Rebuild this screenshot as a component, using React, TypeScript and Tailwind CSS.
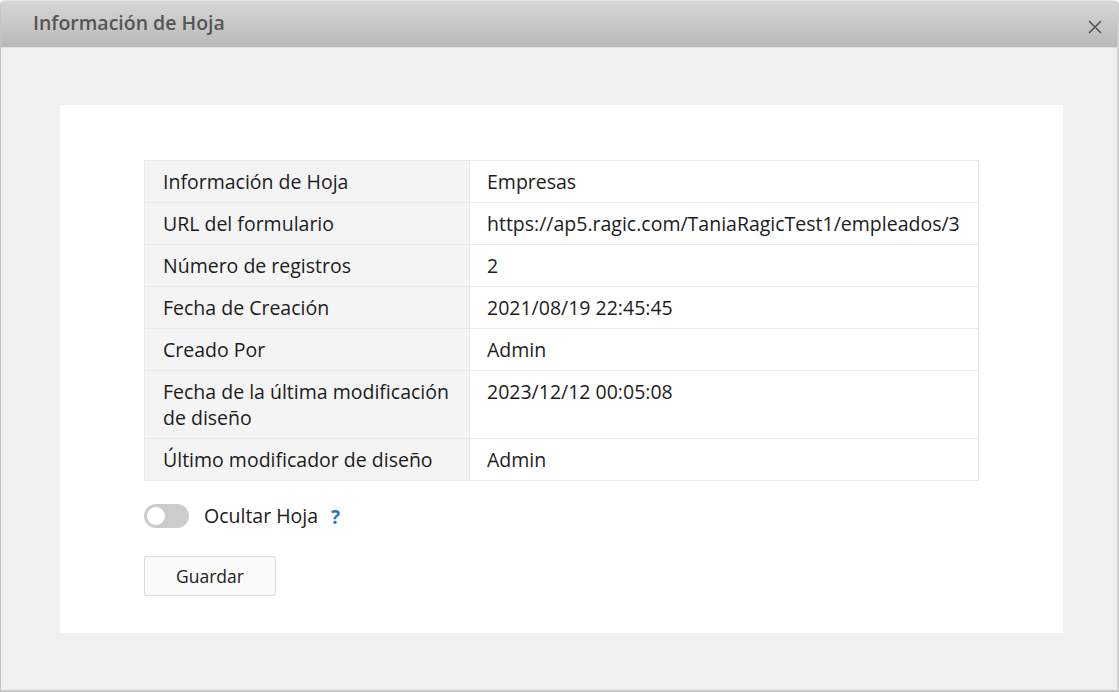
import React from "react";

const rows: [string, string][] = [
  ["Información de Hoja", "Empresas"],
  ["URL del formulario", "https://ap5.ragic.com/TaniaRagicTest1/empleados/3"],
  ["Número de registros", "2"],
  ["Fecha de Creación", "2021/08/19 22:45:45"],
  ["Creado Por", "Admin"],
  ["Fecha de la última modificación de diseño", "2023/12/12 00:05:08"],
  ["Último modificador de diseño", "Admin"],
];

export default function App() {
  return (
    <div
      className="w-[1119px] h-[692px] bg-white"
      style={{ fontFamily: '"Open Sans", "Noto Sans", sans-serif' }}
    >
      <div className="w-full h-full flex flex-col rounded-t-[5px] border border-[#c4c4c4] border-t-[#e6e6e6] border-b-2 border-b-[#c8c8c8] border-r-2 border-r-[#cfcfcf] overflow-hidden bg-[#f0f0f0]">
        <div className="h-[47px] shrink-0 flex items-center justify-between pl-[32px] pr-[14px] bg-gradient-to-b from-[#d6d6d6] to-[#b9b9b9] border-b border-[#e0e0e0]">
          <span className="text-[19.5px] font-semibold text-[#555555] leading-none -mt-[3px]">Información de Hoja</span>
          <svg width="16" height="16" viewBox="0 0 16 16" className="mt-[6px]">
            <path d="M2 2 L14 14 M14 2 L2 14" stroke="#555" strokeWidth="1.6" fill="none" />
          </svg>
        </div>
        <div className="flex-1 pl-[59px] pr-[54px] pt-[57px]">
          <div className="bg-white h-[528px] pl-[84px] pt-[55px]">
            <table className="w-[835px] border-collapse text-[19.5px] leading-[26px] text-[#1c1c1c]">
              <tbody>
                {rows.map(([k, v], i) => (
                  <tr key={i}>
                    <td className="w-[325px] bg-[#f4f4f4] border border-[#e9e9e9] align-top pl-[18px] pr-[10px] pt-[8px] pb-[7px]">
                      {k}
                    </td>
                    <td className="bg-white border border-[#e9e9e9] align-top pl-[17px] pr-[10px] pt-[8px] pb-[7px] whitespace-nowrap">
                      {v}
                    </td>
                  </tr>
                ))}
              </tbody>
            </table>
            <div className="flex items-center mt-[22px] h-[26px]">
              <div className="w-[45px] h-[24px] rounded-full bg-[#cccccc] relative">
                <div className="absolute left-[3px] top-[3px] w-[18px] h-[18px] rounded-full bg-white" />
              </div>
              <span className="ml-[15px] text-[19.5px] text-[#1c1c1c]">Ocultar Hoja</span>
              <span className="ml-[13px] text-[19px] font-bold text-[#1a7dc4] mt-[2px]">?</span>
            </div>
            <button className="mt-[27px] w-[132px] h-[40px] border border-[#dcdcdc] rounded-[3px] bg-[#fafafa] text-[17.5px] text-[#222]">
              Guardar
            </button>
          </div>
        </div>
      </div>
    </div>
  );
}
